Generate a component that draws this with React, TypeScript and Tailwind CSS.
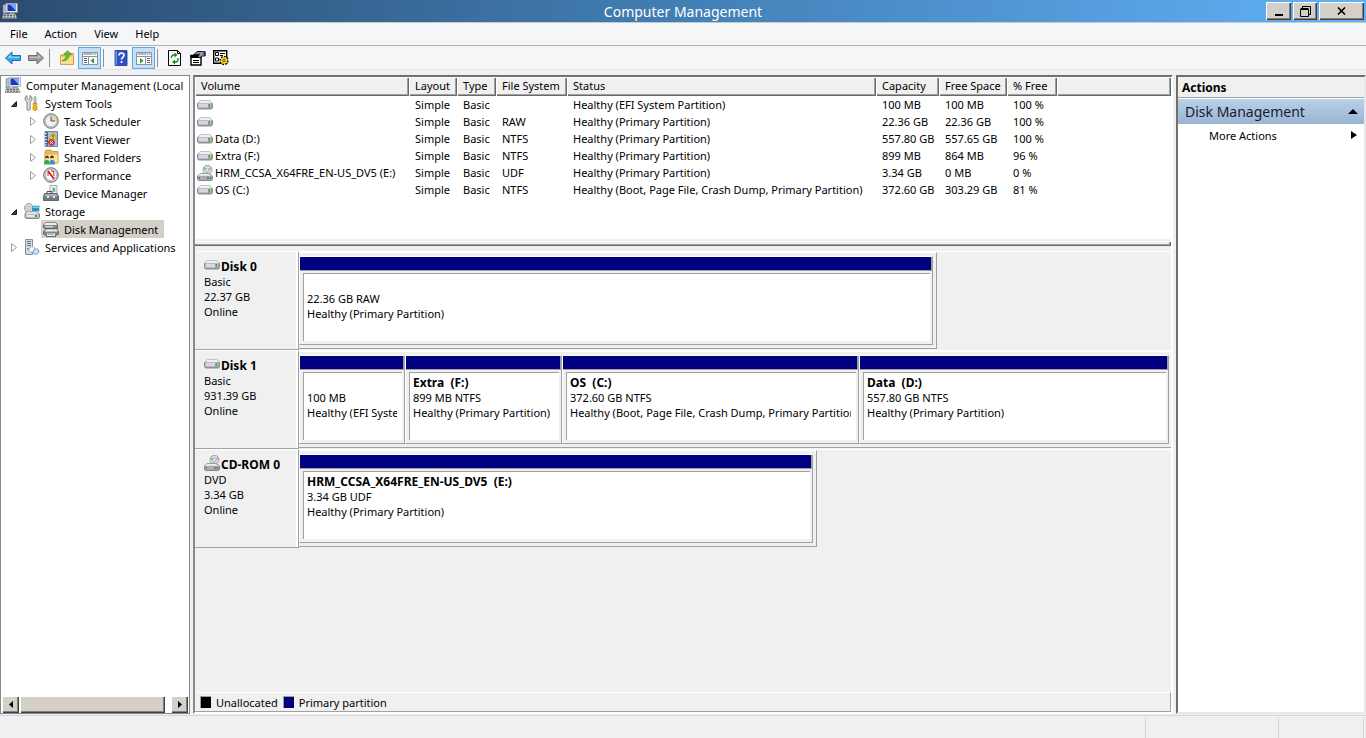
import React from 'react';

interface Volume {
  name: string;
  icon: 'drive' | 'cd';
  fileSystem: string;
  status: string;
  capacity: string;
  free: string;
  percent: string;
}

interface Partition {
  title?: string;
  size: string;
  status: string;
}

interface Disk {
  name: string;
  icon: 'drive' | 'cd';
  type: string;
  size: string;
  frame: string;
  columns: string;
  partitions: Partition[];
}

const volumes: Volume[] = [
  { name: '', icon: 'drive', fileSystem: '', status: 'Healthy (EFI System Partition)', capacity: '100 MB', free: '100 MB', percent: '100 %' },
  { name: '', icon: 'drive', fileSystem: 'RAW', status: 'Healthy (Primary Partition)', capacity: '22.36 GB', free: '22.36 GB', percent: '100 %' },
  { name: 'Data (D:)', icon: 'drive', fileSystem: 'NTFS', status: 'Healthy (Primary Partition)', capacity: '557.80 GB', free: '557.65 GB', percent: '100 %' },
  { name: 'Extra (F:)', icon: 'drive', fileSystem: 'NTFS', status: 'Healthy (Primary Partition)', capacity: '899 MB', free: '864 MB', percent: '96 %' },
  { name: 'HRM_CCSA_X64FRE_EN-US_DV5 (E:)', icon: 'cd', fileSystem: 'UDF', status: 'Healthy (Primary Partition)', capacity: '3.34 GB', free: '0 MB', percent: '0 %' },
  { name: 'OS (C:)', icon: 'drive', fileSystem: 'NTFS', status: 'Healthy (Boot, Page File, Crash Dump, Primary Partition)', capacity: '372.60 GB', free: '303.29 GB', percent: '81 %' },
];

const disks: Disk[] = [
  {
    name: 'Disk 0',
    icon: 'drive',
    type: 'Basic',
    size: '22.37 GB',
    frame: 'w-[73.2%] border-r pr-[3px]',
    columns: 'grid-cols-1',
    partitions: [{ size: '22.36 GB RAW', status: 'Healthy (Primary Partition)' }],
  },
  {
    name: 'Disk 1',
    icon: 'drive',
    type: 'Basic',
    size: '931.39 GB',
    frame: 'w-full pr-[2px]',
    columns: 'grid-cols-[106fr_157fr_297fr_310fr]',
    partitions: [
      { size: '100 MB', status: 'Healthy (EFI System Partition)' },
      { title: 'Extra  (F:)', size: '899 MB NTFS', status: 'Healthy (Primary Partition)' },
      { title: 'OS  (C:)', size: '372.60 GB NTFS', status: 'Healthy (Boot, Page File, Crash Dump, Primary Partition)' },
      { title: 'Data  (D:)', size: '557.80 GB NTFS', status: 'Healthy (Primary Partition)' },
    ],
  },
  {
    name: 'CD-ROM 0',
    icon: 'cd',
    type: 'DVD',
    size: '3.34 GB',
    frame: 'w-[59.4%] border-r pr-[3px]',
    columns: 'grid-cols-1',
    partitions: [
      { title: 'HRM_CCSA_X64FRE_EN-US_DV5  (E:)', size: '3.34 GB UDF', status: 'Healthy (Primary Partition)' },
    ],
  },
];

const columns = [
  { label: 'Volume', width: 'w-[214px]' },
  { label: 'Layout', width: 'w-[48px]' },
  { label: 'Type', width: 'w-[39px]' },
  { label: 'File System', width: 'w-[71px]' },
  { label: 'Status', width: 'w-[309px]' },
  { label: 'Capacity', width: 'w-[63px]' },
  { label: 'Free Space', width: 'w-[68px]' },
  { label: '% Free', width: 'w-[50px]' },
  { label: '', width: '' },
];

const Icon: React.FC<{ children: React.ReactNode }> = ({ children }) => (
  <svg width="16" height="16" viewBox="0 0 16 16" className="block shrink-0" aria-hidden="true">
    {children}
  </svg>
);

const ComputerIcon = () => (
  <Icon>
    <path d="M1 2 5 1v9l-4 1z" fill="#b9bdc4" stroke="#72767e" strokeWidth=".6" />
    <path d="M4 .3h11.500v9.200H4z" fill="#e4e7ec" stroke="#8b9099" strokeWidth=".6" />
    <path d="M5.500 1.500H14V8H5.500z" fill="#1438b8" />
    <path d="M8 1.500h6V8z" fill="#7ea6f2" />
    <path d="M8 9.500h4l1 2H7z" fill="#a5a9b0" />
    <path d="M1.500 11h12l1.500 4.500H0z" fill="#c9ccd0" stroke="#666a70" strokeWidth=".6" />
    <path d="M2 12.500h2m1 0h2m1 0h2m1 0h2M2 14.200h2m1 0h2m1 0h2m1 0h2" stroke="#4b4e54" strokeWidth=".9" />
    <path d="M11 12h2v1h-2z" fill="#3fae49" />
  </Icon>
);

const DriveIcon = () => (
  <Icon>
    <path d="M3 4h10l2.500 2.500v4l-1 1.500h-13l-1-1.500v-4z" fill="#a2a3a9" stroke="#77787d" strokeWidth=".8" />
    <path d="M3 3.500h10l2 3H1z" fill="#f0f0f0" stroke="#b4b4b8" strokeWidth=".6" />
    <path d="M1.500 7h12v3.500h-12z" fill="#d5d7e2" />
    <path d="M11.500 7H13v3.500h-1.500z" fill="#2f7d33" />
    <path d="M12.500 7.500h1v3h-1z" fill="#7fd957" />
  </Icon>
);

const CdIcon = () => (
  <Icon>
    <circle cx="10.500" cy="4.800" r="4.500" fill="#d9dce2" stroke="#8d9096" strokeWidth=".8" />
    <path d="M10.500 5 6.500 5l.5-3z" fill="#6fd096" />
    <path d="m10.500 5 3.500-3 1 2z" fill="#d391de" />
    <path d="m10.500 5-2 4.200H11z" fill="#8fc1ee" />
    <circle cx="10.500" cy="4.800" r="1.500" fill="#fff" stroke="#85888e" strokeWidth=".6" />
    <path d="M3 8.500h9l3.500 2.500v3.500l-1 1h-13l-1-1V11z" fill="#b4b5bb" stroke="#707176" strokeWidth=".8" />
    <path d="M3 8.700h8.500l3 2.100H1z" fill="#eeeef0" />
    <path d="M1.500 11.800h13v2.400h-13z" fill="#74757c" />
    <path d="M3 13h7" stroke="#e8e8ee" />
    <path d="M11.500 12.300H13v1.400h-1.500z" fill="#52d052" />
  </Icon>
);

const ToolsIcon = () => (
  <Icon>
    <path d="M3 .5v3l1.500 1 1.500-1v-3c1.500.8 2 2 2 3.500S7 6.500 6.200 7v7c0 2-3.200 2-3.200 0V7C2 6.500 1 5.500 1 4S1.500 1.300 3 .5z" fill="#d8dade" stroke="#6d7076" strokeWidth=".8" />
    <path d="M10.500 1.500h1l.5 1v6h-2v-6z" fill="#c9cbd0" stroke="#77797e" strokeWidth=".6" />
    <path d="M9 8.500h4v1.200l-.8.800.8 1v3l-1 1h-2l-1-1v-3l.8-1-.8-.8z" fill="#f2b412" stroke="#b27800" strokeWidth=".6" />
  </Icon>
);

const ClockIcon = () => (
  <Icon>
    <circle cx="8" cy="8" r="7.300" fill="#c9ccd2" stroke="#65686e" strokeWidth=".9" />
    <circle cx="8" cy="8" r="5.600" fill="#eef2f8" stroke="#a7abb3" strokeWidth=".6" />
    <path d="M8 2.400A5.600 5.600 0 0 1 13.600 8H8z" fill="#f5cf8e" />
    <path d="M8 3.500V8h4" fill="none" stroke="#4c515b" />
  </Icon>
);

const EventIcon = () => (
  <Icon>
    <path d="M2 .5h12.500v15H2z" fill="#aebfdc" stroke="#55698f" strokeWidth=".8" />
    <path d="M2.400 1H5v14H2.400z" fill="#4c628c" />
    <path d="M1 2.500h3m-3 3h3m-3 3h3m-3 3h3m-3 2.500h3" stroke="#dce3ef" strokeWidth=".9" />
    <path d="m10 1.500 4 6.500H6z" fill="#ffd42a" stroke="#b48b00" strokeWidth=".6" />
    <path d="M10 3.500v2.500m0 .5v1" stroke="#222" />
    <circle cx="8.500" cy="11.500" r="3" fill="#d93a3a" stroke="#9c1f1f" strokeWidth=".5" />
    <path d="m7.300 10.300 2.400 2.400m0-2.400-2.400 2.400" stroke="#fff" />
  </Icon>
);

const SharedIcon = () => (
  <Icon>
    <path d="M2 2.500 3 1h5l1 1.500h6V14H2z" fill="#e8bc55" stroke="#b78b2c" strokeWidth=".7" />
    <path d="M2 5h13v9H2z" fill="#fae29a" stroke="#c99f3f" strokeWidth=".6" />
    <circle cx="4" cy="8.300" r="1.800" fill="#5c3b1e" />
    <circle cx="9" cy="8.300" r="1.800" fill="#4b3425" />
    <path d="M1 15.500c0-3.500 1-4.500 3-4.500s2.500 1 2.500 4.500z" fill="#3aa655" />
    <path d="M6.500 15.500c0-3.500.5-4.500 2.500-4.500s3 1 3 4.500z" fill="#3f8fd2" />
    <path d="M3 9h2v2H3zm5 0h2v2H8z" fill="#f5d2ab" />
  </Icon>
);

const PerformanceIcon = () => (
  <Icon>
    <circle cx="8" cy="8" r="7.300" fill="#d0d2d6" stroke="#5d6066" strokeWidth=".9" />
    <circle cx="8" cy="8" r="5.500" fill="#fff" stroke="#8c8f95" strokeWidth=".6" />
    <path d="m5 4 6 8" stroke="#d21f1f" strokeWidth="1.800" />
    <path d="M5 9V5.500m3-1.500h2.500L11 9" fill="none" stroke="#d21f1f" />
  </Icon>
);

const DeviceIcon = () => (
  <Icon>
    <path d="M7 .5h7v9H7z" fill="#f3f4f6" stroke="#86898f" strokeWidth=".7" />
    <path d="M9 2.500h3.500V7H9z" fill="#c5c9d0" />
    <path d="M11 3v3.500" stroke="#3aa33a" strokeWidth="1.200" />
    <path d="M4 9V6.500h5V9" fill="none" stroke="#4e535a" />
    <path d="M1.500 8.500h12.500l1.500 3v4H.5v-4z" fill="#727983" stroke="#3d4249" strokeWidth=".7" />
    <path d="M2 9h11.500l1 2.500h-13z" fill="#aab1ba" />
    <path d="M4 11h2v2H4zm6 0h2v2h-2z" fill="#e4e7ea" />
  </Icon>
);

const StorageIcon = () => (
  <Icon>
    <circle cx="5" cy="5" r="4.500" fill="#d5d8dd" stroke="#7b7e84" strokeWidth=".7" />
    <circle cx="5" cy="5" r="1.500" fill="#fff" stroke="#85888e" strokeWidth=".6" />
    <path d="M7.500 2.500h8v6h-8z" fill="#2c8fd0" stroke="#c6d8e4" />
    <path d="M8.500 3.500h6v1.500h-6z" fill="#83ccf2" />
    <path d="M2 9h11l2.500 2v3.500l-1 1H2l-1-1V11z" fill="#b9bac0" stroke="#6e6f75" strokeWidth=".8" />
    <path d="M2.500 9.200h10.300l1.800 1.600H1.500z" fill="#f3f3f5" />
    <path d="M2.500 12h11v2h-11z" fill="#e4e5ea" />
    <path d="M11 12h2v2h-2z" fill="#35a935" />
  </Icon>
);

const DiskMgmtIcon = () => (
  <Icon>
    <path d="M3 1.500h9.500l2 2.500v3.500h-13L.5 6.500V4z" fill="#85868c" stroke="#515257" strokeWidth=".8" />
    <path d="M3 1.700h9.300L14 4H1z" fill="#f1f1f3" />
    <path d="M2 5.800h8" stroke="#e8e8ec" strokeWidth="1.200" />
    <path d="M11.500 5h1.500v1.500h-1.500z" fill="#55c455" />
    <path d="M3.500 8h10l2 2.500V13l-1 1h-2v1.500h-9V14h-2l-1-1v-2.500z" fill="#85868c" stroke="#515257" strokeWidth=".8" />
    <path d="M3.500 8.200h9.800l1.700 2.300H1.500z" fill="#ececef" />
    <path d="M4 12.500h8v2.500H4z" fill="#f4f4f6" />
    <path d="M5 13.500h6" stroke="#9a9ba1" strokeWidth=".8" />
  </Icon>
);

const ServicesIcon = () => (
  <Icon>
    <path d="M1.500.5h7v15h-7z" fill="#d8dbe0" stroke="#71757c" strokeWidth=".8" />
    <path d="M3 2.500h4M3 4.500h4M3 6.500h4" stroke="#6c727b" />
    <path d="M3 9h2v1.500H3z" fill="#44b144" />
    <circle cx="8" cy="10.500" r="2.800" fill="#fff" stroke="#9fb3c8" strokeWidth="1.400" strokeDasharray="1.300 .8" />
    <circle cx="12" cy="12.500" r="2.600" fill="#dbe8f5" stroke="#5b93cc" strokeWidth="1.400" strokeDasharray="1.300 .8" />
  </Icon>
);

const ConsoleIcon = ({ flip = false }: { flip?: boolean }) => (
  <Icon>
    <path d="M.5 2.500h15v12H.5z" fill="#fff" stroke="#8c939c" />
    <path d="M1 3h14v2H1z" fill="#dde1e6" />
    <path d="M2 4h8m1 0h1m1 0h1" stroke="#868d96" />
    <path d="M1 6.500h14" stroke="#8c939c" />
    {flip ? (
      <>
        <path d="M9.500 7v7.500" stroke="#8c939c" />
        <path d="M11 8.500h3M11 10.500h3M11 12.500h3" stroke="#5a6570" />
        <path d="m4 8 3.500 2.800L4 13.500z" fill="#23a02b" />
      </>
    ) : (
      <>
        <path d="M6.500 7v7.500" stroke="#8c939c" />
        <path d="M2 8.500h3M2 10.500h3M2 12.500h3" stroke="#5a6570" />
        <path d="m12 8-3.500 2.800L12 13.500z" fill="#23a02b" />
      </>
    )}
  </Icon>
);

const ToolButton: React.FC<{ label: string; active?: boolean; children: React.ReactNode }> = ({ label, active, children }) => (
  <button
    type="button"
    aria-label={label}
    className={`flex h-[22px] w-[23px] items-center justify-center border ${
      active ? 'border-[#5ea9e6] bg-[#c4e0f7]' : 'border-transparent'
    }`}
  >
    {children}
  </button>
);

const Separator = () => <div className="mr-[5px] ml-[2px] h-[18px] w-px bg-[#8e9094]" />;

const Expander = ({ open }: { open: boolean }) => (
  <svg width="8" height="10" viewBox="0 0 8 10" className="block shrink-0" aria-hidden="true">
    {open ? (
      <path d="M6.500 3.500v5h-5z" fill="#404040" stroke="#202020" />
    ) : (
      <path d="M1.500 1.500v8L6.500 5.500z" fill="#fff" stroke="#9b9b9b" />
    )}
  </svg>
);

interface TreeItemProps {
  label: string;
  icon: React.ReactNode;
  level: 1 | 2;
  open?: boolean;
  selected?: boolean;
}

const TreeItem: React.FC<TreeItemProps> = ({ label, icon, level, open, selected }) => (
  <li className={`flex h-[18px] items-center ${level === 1 ? 'pl-[9px]' : 'pl-[28px]'}`}>
    <span className="w-[12px]">{open !== undefined && <Expander open={open} />}</span>
    <span className={`flex h-[18px] items-center gap-[5px] pr-[6px] pl-[2px] ${selected ? 'bg-[#d4d0c8]' : ''}`}>
      {icon}
      {label}
    </span>
  </li>
);

const bevel =
  'bg-[#d4d0c8] shadow-[inset_1px_1px_0_#fff,inset_-1px_-1px_0_#404040,inset_-2px_-2px_0_#808080]';

const PartitionBlock = ({ partition }: { partition: Partition }) => (
  <div className="flex h-[89px] min-w-0 flex-col border-t border-r border-b border-l border-t-white border-r-[#a0a0a0] border-b-[#a0a0a0] border-l-white">
    <div className="h-[14px] shrink-0 border-r border-b border-[#a0a0a0] bg-[#000080]" />
    <div className="mt-[2px] mr-[2px] mb-[3px] ml-[3px] flex-1 overflow-hidden border-t border-l border-[#a0a0a0] bg-white pt-[2px] pr-[5px] pl-[3px]">
      <div className="overflow-hidden leading-[15px] whitespace-pre">
        <div className="h-[15px] text-[12px] font-bold">{partition.title}</div>
        <div>{partition.size}</div>
        <div className="overflow-hidden">{partition.status}</div>
      </div>
    </div>
  </div>
);

const App: React.FC = () => {
  return (
    <div className="flex min-h-screen flex-col bg-[#f0f0f0] font-['Noto_Sans','Open_Sans',sans-serif] text-[11px] leading-[15px] text-black">
      {/* Title bar */}
      <header className="flex h-[23px] items-center border-b border-[#c9c9c9] bg-linear-to-r from-[#2b4c70] via-[#427fb5] to-[#62b1f8] pr-[2px] pl-[2px]">
        <div className="flex flex-1">
          <ComputerIcon />
        </div>
        <h1 className="pt-px text-[14px] leading-[20px] text-white">Computer Management</h1>
        <div className="flex flex-1 justify-end gap-[2px]">
          <button type="button" aria-label="Minimize" className={`flex h-[18px] w-[25px] items-end justify-center pb-1 ${bevel}`}>
            <span className="h-[2px] w-2 bg-black" />
          </button>
          <button type="button" aria-label="Restore" className={`flex h-[18px] w-[24px] items-center justify-center ${bevel}`}>
            <svg width="11" height="11" viewBox="0 0 11 11" fill="none" stroke="#000" aria-hidden="true">
              <path d="M2.500 2V.5h8v8H9" />
              <path d="M.5 3.500h8v7h-8zM.5 2.500h8" />
            </svg>
          </button>
          <button type="button" aria-label="Close" className={`flex h-[18px] w-[45px] items-center justify-center ${bevel}`}>
            <svg width="9" height="8" viewBox="0 0 9 8" fill="none" stroke="#000" strokeWidth="1.600" aria-hidden="true">
              <path d="m1 .5 7 7m0-7-7 7" />
            </svg>
          </button>
        </div>
      </header>

      {/* Menu */}
      <nav className="flex h-[23px] items-center gap-[17px] border-b border-[#b0b1b5] bg-[#f5f6f8] pb-[2px] pl-[10px]">
        {['File', 'Action', 'View', 'Help'].map((item) => (
          <button key={item} type="button">
            {item}
          </button>
        ))}
      </nav>

      {/* Toolbar */}
      <div className="flex h-[24px] items-center border-b border-[#e2e4e7] bg-[#f5f6f8] pt-px pl-px">
        <ToolButton label="Back">
          <Icon>
            <path d="M.5 8 7 2v3.500h8.500v5H7V14z" fill="#36a9e8" stroke="#1a6fae" />
            <path d="M2.500 8 6 4.800v1.900h8.500v1H3z" fill="#a5dcf8" />
          </Icon>
        </ToolButton>
        <ToolButton label="Forward">
          <Icon>
            <path d="M15.500 8 9 2v3.500H.5v5H9V14z" fill="#9a9a9a" stroke="#6e6e6e" />
            <path d="M13.500 8 10 4.800v1.900H1.500v1H13z" fill="#c8c8c8" />
          </Icon>
        </ToolButton>
        <Separator />
        <ToolButton label="Up one level">
          <Icon>
            <path d="M1.500 5h5l1.500-1.500h6.500v11h-13z" fill="#eec569" stroke="#c2933b" strokeWidth=".8" />
            <path d="M2 7h12v7H2z" fill="#f8dc93" />
            <path d="M3 10.500C6 10 7 8 7 4.500H4.500L8.500.8l4 3.700H10C10 9 7 11.500 3 10.500z" fill="#5cc832" stroke="#2f8a17" strokeWidth=".6" />
          </Icon>
        </ToolButton>
        <ToolButton label="Show or hide console tree" active>
          <ConsoleIcon />
        </ToolButton>
        <Separator />
        <ToolButton label="Help">
          <Icon>
            <path d="M2 .5h12v15H2z" fill="#2d52c4" stroke="#1b358e" strokeWidth=".8" />
            <path d="M2.400 1H4v14H2.400z" fill="#6e8ee6" />
            <path d="M6 5.500c0-3.300 5-3.300 5-.2 0 2-2.500 2-2.500 4.200M8.500 11v2" fill="none" stroke="#fff" strokeWidth="1.700" />
          </Icon>
        </ToolButton>
        <ToolButton label="Show or hide action pane" active>
          <ConsoleIcon flip />
        </ToolButton>
        <Separator />
        <ToolButton label="Refresh">
          <Icon>
            <path d="M1.500.5h9l3 3v12h-12z" fill="#fff" stroke="#000" />
            <path d="M10.500.5v3h3" fill="none" stroke="#000" />
            <path d="M4.500 8V6.500L6 5h3m2 3v2.500L9.500 12H7" fill="none" stroke="#0a8a1a" strokeWidth="1.300" />
            <path d="m7.500 2.500 3 2.500-3 2.500zM8 9.500 5 12l3 2.500z" fill="#0a8a1a" />
          </Icon>
        </ToolButton>
        <ToolButton label="Properties">
          <Icon>
            <path d="M1 5.500h10v9.500H1z" fill="#fff" stroke="#000" strokeWidth="1.400" />
            <path d="M.5 5h11v3H.5z" fill="#000" />
            <path d="M3 10.500h6M3 12.500h6" stroke="#000" strokeWidth="1.200" />
            <path d="m3.500 5 3.500-3.500h5.500l2.500 1v3.500h-2.500L9.500 8 8 6.500 9.500 4z" fill="#9b9b9b" stroke="#000" strokeWidth=".9" />
            <path d="M13.500 1h2v5h-2z" fill="#1b2a8c" />
          </Icon>
        </ToolButton>
        <ToolButton label="Settings">
          <Icon>
            <path d="M.7.700h13v12.500H.7z" fill="#fff" stroke="#000" strokeWidth="1.400" />
            <path d="M2.500 2.500h3v3h-3zM2.500 8h3v3h-3z" fill="#fff" stroke="#000" />
            <path d="M7 3.500h5M7 5.500h3" stroke="#000" />
            <circle cx="11" cy="10.500" r="3.800" fill="#f5d90a" stroke="#000" strokeWidth="1.800" strokeDasharray="1.700 1.200" />
            <circle cx="11" cy="10.500" r="3.200" fill="#f5d90a" />
            <circle cx="11" cy="10.500" r="1.200" fill="#fff" stroke="#000" strokeWidth=".7" />
          </Icon>
        </ToolButton>
      </div>

      <main className="flex flex-1 gap-[3px] pt-[5px]">
        {/* Console tree */}
        <aside className="flex w-[190px] shrink-0 flex-col overflow-hidden border border-[#828790] bg-white whitespace-nowrap">
          <div className="flex h-[18px] items-center gap-[5px] pl-[4px]">
            <ComputerIcon />
            Computer Management (Local
          </div>
          <ul className="flex-1">
            <TreeItem level={1} open label="System Tools" icon={<ToolsIcon />} />
            <TreeItem level={2} open={false} label="Task Scheduler" icon={<ClockIcon />} />
            <TreeItem level={2} open={false} label="Event Viewer" icon={<EventIcon />} />
            <TreeItem level={2} open={false} label="Shared Folders" icon={<SharedIcon />} />
            <TreeItem level={2} open={false} label="Performance" icon={<PerformanceIcon />} />
            <TreeItem level={2} label="Device Manager" icon={<DeviceIcon />} />
            <TreeItem level={1} open label="Storage" icon={<StorageIcon />} />
            <TreeItem level={2} selected label="Disk Management" icon={<DiskMgmtIcon />} />
            <TreeItem level={1} open={false} label="Services and Applications" icon={<ServicesIcon />} />
          </ul>
          {/* Horizontal scroll bar */}
          <div className="flex h-[17px] gap-px pr-px pl-px">
            <button type="button" aria-label="Scroll left" className={`flex w-[17px] items-center justify-center ${bevel}`}>
              <svg width="4" height="7" viewBox="0 0 4 7" aria-hidden="true">
                <path d="M4 0v7L0 3.500z" />
              </svg>
            </button>
            <div className={`w-[145px] ${bevel}`} />
            <div className="flex-1" />
            <button type="button" aria-label="Scroll right" className={`flex w-[17px] items-center justify-center ${bevel}`}>
              <svg width="4" height="7" viewBox="0 0 4 7" aria-hidden="true">
                <path d="M0 0v7l4-3.500z" />
              </svg>
            </button>
          </div>
        </aside>

        <section className="flex min-w-0 flex-1 flex-col border-t-2 border-r-2 border-b-2 border-l-2 border-t-[#707070] border-r-white border-b-white border-l-[#8a8a8a]">
          {/* Volume list */}
          <div className="h-[162px] shrink-0 overflow-hidden bg-white">
            <table className="w-full table-fixed border-collapse text-left whitespace-nowrap">
              <thead>
                <tr className="h-[19px]">
                  {columns.map((column) => (
                    <th
                      key={column.label}
                      className={`bg-[#f0f0f0] p-0 pb-[2px] pl-[6px] font-normal shadow-[inset_1px_1px_0_#fff,inset_-1px_-1px_0_#696969,inset_-2px_-2px_0_#a0a0a0] ${column.width}`}
                    >
                      {column.label}
                    </th>
                  ))}
                </tr>
              </thead>
              <tbody>
                {volumes.map((volume, index) => (
                  <tr key={index} className="h-[17px]">
                    <td className="p-0 pl-[2px]">
                      <div className="flex h-[17px] items-center gap-[2px]">
                        {volume.icon === 'cd' ? <CdIcon /> : <DriveIcon />}
                        {volume.name}
                      </div>
                    </td>
                    <td className="p-0 pl-[6px]">Simple</td>
                    <td className="p-0 pl-[6px]">Basic</td>
                    <td className="p-0 pl-[6px]">{volume.fileSystem}</td>
                    <td className="p-0 pl-[6px]">{volume.status}</td>
                    <td className="p-0 pl-[6px]">{volume.capacity}</td>
                    <td className="p-0 pl-[6px]">{volume.free}</td>
                    <td className="p-0 pl-[6px]">{volume.percent}</td>
                    <td className="p-0" />
                  </tr>
                ))}
              </tbody>
            </table>
          </div>

          {/* Splitter */}
          <div className="h-[7px] shrink-0 border-t-2 border-[#f0f0f0] shadow-[inset_0_1px_0_#fff,inset_-1px_-1px_0_#696969,inset_-2px_-2px_0_#a0a0a0]" />

          {/* Graphical view */}
          <div className="flex-1 pt-[5px]">
            {disks.map((disk) => (
              <div key={disk.name} className="flex h-[99px] border-t border-white">
                <div className="w-[104px] shrink-0 border-r border-b border-[#a0a0a0] pt-[7px] pl-[9px] shadow-[inset_-2px_0_0_#fff]">
                  <div className="flex h-[15px] gap-px text-[12px] font-bold whitespace-nowrap">
                    <div className="-mt-[2px]">{disk.icon === 'cd' ? <CdIcon /> : <DriveIcon />}</div>
                    {disk.name}
                  </div>
                  <div>{disk.type}</div>
                  <div>{disk.size}</div>
                  <div>Online</div>
                </div>
                <div className="min-w-0 flex-1">
                  <div className={`border-t border-b border-t-white border-r-[#a0a0a0] border-b-[#a0a0a0] py-[3px] ${disk.frame}`}>
                    <div className={`grid ${disk.columns}`}>
                      {disk.partitions.map((partition, index) => (
                        <PartitionBlock key={index} partition={partition} />
                      ))}
                    </div>
                  </div>
                </div>
              </div>
            ))}
          </div>

          {/* Legend */}
          <div className="flex h-[20px] items-center gap-[5px] border-t border-r border-b border-t-white border-r-[#a0a0a0] border-b-[#a0a0a0] pl-[5px]">
            <span className="h-[12px] w-[11px] border-t border-l border-[#a0a0a0] bg-black" />
            <span>Unallocated</span>
            <span className="h-[12px] w-[11px] border-t border-l border-[#a0a0a0] bg-[#000080]" />
            <span>Primary partition</span>
          </div>
        </section>

        {/* Actions */}
        <aside className="w-[190px] shrink-0 border-t-2 border-r-2 border-b-2 border-l-2 border-t-[#707070] border-r-[#e8e8e8] border-b-[#e8e8e8] border-l-[#707070] bg-white">
          <h2 className="h-[21px] border-b border-[#a0a0a0] bg-[#f0f0f0] pt-[3px] pl-[4px] text-[12px] font-bold">Actions</h2>
          <button
            type="button"
            className="mt-px flex h-[25px] w-full items-center justify-between bg-linear-to-b from-[#b9d1ea] to-[#99b4d1] pr-[6px] pl-[7px] text-[14px] text-[#1a1a2e]"
          >
            Disk Management
            <svg width="10" height="5" viewBox="0 0 10 5" aria-hidden="true">
              <path d="M0 5h10L5 0z" />
            </svg>
          </button>
          <button type="button" className="flex h-[22px] w-full items-center justify-between pr-[7px] pl-[31px]">
            More Actions
            <svg width="6" height="8" viewBox="0 0 6 8" aria-hidden="true">
              <path d="M0 0v8l6-4z" />
            </svg>
          </button>
        </aside>
      </main>

      {/* Status bar */}
      <footer className="mt-px flex h-[23px] justify-end border-t border-[#d5d5d5] pt-px pr-[2px]">
        <div className="w-[133px] border-l border-[#d5d5d5]" />
        <div className="w-[86px] border-r border-l border-[#d5d5d5]" />
      </footer>
    </div>
  );
};

export default App;
